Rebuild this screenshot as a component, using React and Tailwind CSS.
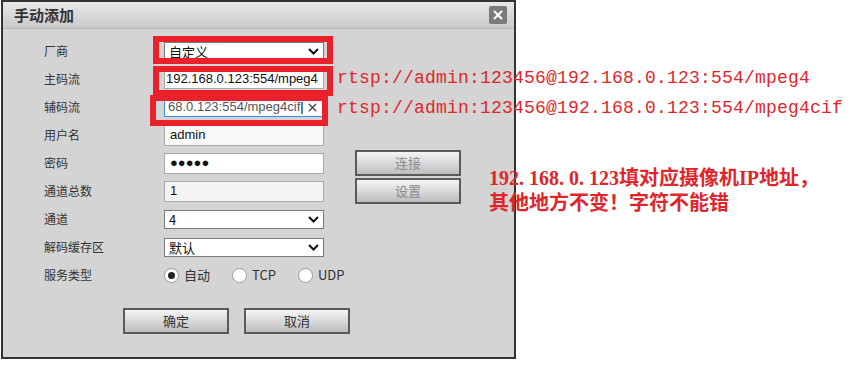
import { X } from 'lucide-react'

const cjk = "font-['Noto_Sans_CJK_SC',sans-serif]"

function Chevron() {
  return (
    <svg width="11" height="7" viewBox="0 0 11 7" className="mr-[4px] shrink-0">
      <path d="M1 1 L5.5 5.5 L10 1" fill="none" stroke="#111" strokeWidth="2" />
    </svg>
  )
}

function Select({ value }) {
  return (
    <div className="flex h-[19px] w-[160px] items-center justify-between border border-[#7a7a7a] bg-white pl-[4px]">
      <span className={`${cjk} text-[13px] leading-none text-[#111]`}>{value}</span>
      <Chevron />
    </div>
  )
}

function Input({ value, bg = 'bg-white' }) {
  return (
    <div
      className={`flex h-[21px] w-[160px] items-center overflow-hidden whitespace-nowrap border border-[#a9a9a9] ${bg} pl-[5px] text-[13px] text-[#111]`}
    >
      {value}
    </div>
  )
}

function Row({ label, children, extra }) {
  return (
    <div className="flex h-[28px] items-center">
      <div className={`${cjk} w-[120px] text-[12px] text-[#333]`}>{label}</div>
      {children}
      {extra}
    </div>
  )
}

function GrayButton({ label, dim }) {
  return (
    <div
      className={`flex h-[26px] w-[106px] items-center justify-center border-2 border-[#5a5a5a] bg-gradient-to-b from-[#f6f6f6] to-[#bdbdbd] ${cjk} text-[13px] ${dim ? 'text-[#8a8a8a]' : 'text-[#333]'}`}
    >
      {label}
    </div>
  )
}

function Radio({ checked, label }) {
  return (
    <div className="flex items-center gap-[5px]">
      <div className="flex h-[15px] w-[15px] items-center justify-center rounded-full border border-[#9a9a9a] bg-white">
        {checked && <div className="h-[7px] w-[7px] rounded-full bg-[#222]" />}
      </div>
      <span className={`${cjk} text-[13px] text-[#333]`}>{label}</span>
    </div>
  )
}

// SimSun-style half-width dot: 10px cell, dot sits at the left
const Dot = () => <span className="mr-[5px]">.</span>

export default function App() {
  return (
    <div className="relative h-[370px] w-[850px] overflow-hidden bg-white font-['Liberation_Sans','Noto_Sans_CJK_SC',sans-serif]">
      <div className="ml-px flex h-[359px] w-[515px] flex-col border-2 border-[#333] bg-[#d4d4d4]">
        <div className="flex h-[27px] items-center justify-between border-b border-[#b8b8b8] bg-gradient-to-b from-[#e8e8e8] to-[#c9c9c9] pl-[11px] pr-[7px]">
          <span className={`${cjk} text-[15px] font-bold text-[#333]`}>手动添加</span>
          <div className="flex h-[18px] w-[18px] items-center justify-center rounded-[2px] bg-[#7a7a7a]">
            <X size={14} strokeWidth={3.5} color="#fff" />
          </div>
        </div>

        <div className="flex flex-col pl-[41px] pt-[8px]">
          <Row label="厂商">
            <Select value="自定义" />
          </Row>
          <Row label="主码流">
            <div className="flex h-[20px] w-[160px] items-center overflow-hidden whitespace-nowrap border border-[#a9a9a9] bg-white pl-[1px] text-[13px] text-[#111]">
              192.168.0.123:554/mpeg4
            </div>
          </Row>
          <Row label="辅码流">
            <div className="flex h-[20px] w-[160px] items-center justify-between overflow-hidden whitespace-nowrap border border-[#3c8fdc] bg-white pl-[3px] pr-[4px] text-[13px] text-[#555]">
              <span>
                68.0.123:554/mpeg4cif<span className="text-[#000]">|</span>
              </span>
              <X size={13} strokeWidth={2.5} color="#444" />
            </div>
          </Row>
          <Row label="用户名">
            <Input value="admin" bg="bg-[#f8f8f8]" />
          </Row>
          <Row label="密码" extra={<div className="ml-[31px]"><GrayButton label="连接" dim /></div>}>
            <Input value="●●●●●" />
          </Row>
          <Row label="通道总数" extra={<div className="ml-[31px]"><GrayButton label="设置" dim /></div>}>
            <Input value="1" bg="bg-[#f5f5f5]" />
          </Row>
          <Row label="通道">
            <Select value="4" />
          </Row>
          <Row label="解码缓存区">
            <Select value="默认" />
          </Row>
          <Row label="服务类型">
            <div className="flex items-center gap-[22px]">
              <Radio checked label="自动" />
              <Radio label="TCP" />
              <Radio label="UDP" />
            </div>
          </Row>
        </div>

        <div className="mt-[19px] flex gap-[15px] pl-[120px]">
          <GrayButton label="确定" />
          <GrayButton label="取消" />
        </div>
      </div>

      {/* annotations */}
      <div className="absolute left-[153px] top-[36px] h-[28px] w-[180px] border-[6px] border-[#e8212b]" />
      <div className="absolute left-[153px] top-[66px] h-[30px] w-[180px] border-[6px] border-[#e8212b]" />
      <div className="absolute left-[150px] top-[95px] h-[31px] w-[178px] border-[6px] border-[#e8212b]" />

      <div className="absolute left-[337px] top-[68px] whitespace-nowrap font-['Liberation_Mono',monospace] text-[18px] leading-[20px] tracking-[0.2px] text-[#e0262b]">
        rtsp://admin:123456@192.168.0.123:554/mpeg4
      </div>
      <div className="absolute left-[337px] top-[98px] whitespace-nowrap font-['Liberation_Mono',monospace] text-[18px] leading-[20px] tracking-[0.2px] text-[#e0262b]">
        rtsp://admin:123456@192.168.0.123:554/mpeg4cif
      </div>

      <div className={`absolute left-[489px] top-[165px] whitespace-nowrap ${cjk} text-[20px] font-semibold leading-[24px] text-[#e0262b]`}>
        <div>
          <span className="font-['Liberation_Serif',serif] font-bold">
            192<Dot />168<Dot />0<Dot />123
          </span>
          填对应摄像机<span className="font-['Liberation_Serif',serif] font-bold">IP</span>地址，
        </div>
        <div>其他地方不变！字符不能错</div>
      </div>
    </div>
  )
}
